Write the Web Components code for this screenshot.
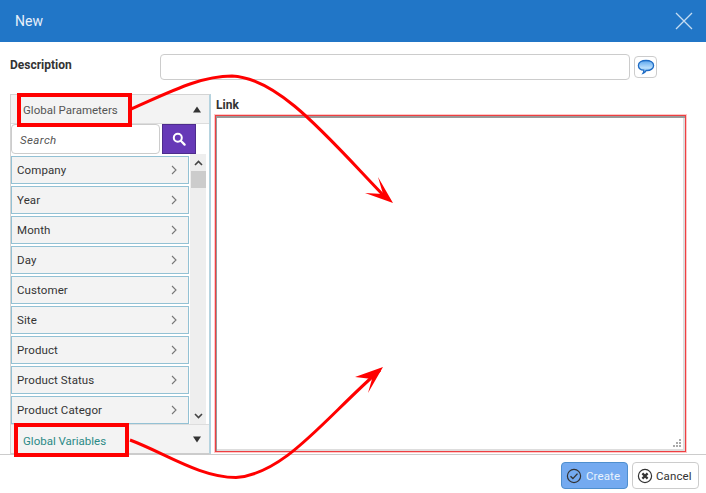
<!DOCTYPE html>
<html>
<head>
<meta charset="utf-8">
<style>
  html, body { margin: 0; height: 100%; background: #fff; }
  body { font-family: Roboto, "Liberation Sans", sans-serif; overflow: hidden; }
</style>
</head>
<body>
<new-dialog></new-dialog>
<script>
class ListRow extends HTMLElement {
  constructor() {
    super();
    this.attachShadow({ mode: 'open' });
    this.shadowRoot.innerHTML = `
      <style>
        :host {
          display: flex;
          align-items: center;
          justify-content: space-between;
          box-sizing: border-box;
          height: 28px;
          margin-bottom: 2px;
          padding: 0 11px 0 5px;
          background: #f3f3f3;
          border: 1px solid #93c1d4;
          font-size: 11.5px;
          letter-spacing: .1px;
          color: #333;
        }
        svg { display: block; }
      </style>
      <slot></slot>
      <svg width="6" height="10" viewBox="0 0 6 10"><path d="M1 1l4 4-4 4" fill="none" stroke="#777" stroke-width="1.1"/></svg>
    `;
  }
}

class AccordionBar extends HTMLElement {
  constructor() {
    super();
    this.attachShadow({ mode: 'open' });
    const up = this.hasAttribute('open');
    this.shadowRoot.innerHTML = `
      <style>
        :host {
          display: flex;
          align-items: center;
          justify-content: space-between;
          box-sizing: border-box;
          padding: 0 8px 0 12px;
          background: #f3f3f3;
          font-size: 11.5px;
          color: var(--bar-color, #555);
        }
        svg { display: block; }
        .text { position: relative; top: var(--text-shift, 0); }
      </style>
      <span class="text"><slot></slot></span>
      <svg width="8" height="7" viewBox="0 0 8 7"><path d="${up ? 'M4 0.5L8 6.5H0Z' : 'M0 0.5H8L4 6.5Z'}" fill="#333"/></svg>
    `;
  }
}

class SearchRow extends HTMLElement {
  constructor() {
    super();
    this.attachShadow({ mode: 'open' });
    this.shadowRoot.innerHTML = `
      <style>
        :host { display: flex; gap: 2px; height: 30px; }
        .field {
          box-sizing: border-box;
          width: 149px;
          padding: 1px 8px 0;
          display: flex;
          align-items: center;
          border: 1px solid #ccc;
          border-radius: 4px;
          background: #fff;
          font-size: 11.5px;
          font-style: italic;
          letter-spacing: .4px;
          color: #555;
        }
        .go {
          box-sizing: border-box;
          width: 34px;
          display: flex;
          align-items: center;
          justify-content: center;
          background: #6639b7;
          border: 1px solid #4d2c8c;
        }
      </style>
      <div class="field">Search</div>
      <div class="go">
        <svg width="14" height="14" viewBox="0 0 14 14"><circle cx="5.8" cy="5.8" r="4" fill="none" stroke="#fff" stroke-width="2"/><path d="M8.8 8.8L12.6 12.6" stroke="#fff" stroke-width="2.2" stroke-linecap="round"/></svg>
      </div>
    `;
  }
}

class ParamPanel extends HTMLElement {
  constructor() {
    super();
    this.attachShadow({ mode: 'open' });
    const names = ['Company', 'Year', 'Month', 'Day', 'Customer', 'Site', 'Product', 'Product Status', 'Product Categor'];
    this.shadowRoot.innerHTML = `
      <style>
        :host {
          display: flex;
          flex-direction: column;
          box-sizing: border-box;
          width: 201px;
          height: 361px;
          border: 1px solid #d4d4d4;
          border-right: 2px solid #b5d3df;
          border-bottom: 2px solid #ccc;
          overflow: hidden;
        }
        accordion-bar.top { height: 29px; border-bottom: 1px solid #ddd; --text-shift: 1px; }
        accordion-bar.bottom { flex: 1; border-top: 1px solid #ddd; --bar-color: #2b8a86; --text-shift: 2px; }
        .list { display: flex; gap: 1px; height: 270px; overflow: hidden; }
        .rows { width: 178px; padding-top: 2px; }
        .scroll {
          width: 16px;
          height: 270px;
          background: #eee;
          display: flex;
          flex-direction: column;
          align-items: center;
          justify-content: space-between;
        }
        .thumb { width: 15px; height: 17px; background: #ccc; }
        .end { height: 17px; display: flex; align-items: center; }
        .col { display: flex; flex-direction: column; align-items: center; }
      </style>
      <accordion-bar class="top" open>Global Parameters</accordion-bar>
      <search-row></search-row>
      <div class="list">
        <div class="rows">${names.map(n => `<list-row>${n}</list-row>`).join('')}</div>
        <div class="scroll">
          <div class="col">
            <div class="end"><svg width="9" height="6" viewBox="0 0 9 6"><path d="M1 5l3.5-3.500L8 5" fill="none" stroke="#444" stroke-width="1.6"/></svg></div>
            <div class="thumb"></div>
          </div>
          <div class="end"><svg width="9" height="6" viewBox="0 0 9 6"><path d="M1 1l3.5 3.5L8 1" fill="none" stroke="#444" stroke-width="1.6"/></svg></div>
        </div>
      </div>
      <accordion-bar class="bottom">Global Variables</accordion-bar>
    `;
  }
}

class DialogButton extends HTMLElement {
  constructor() {
    super();
    this.attachShadow({ mode: 'open' });
    const primary = this.hasAttribute('primary');
    const mark = primary
      ? '<path d="M4.500 8.200l2.400 2.400 4.600-5" fill="none" stroke="#333" stroke-width="1.400"/>'
      : '<path d="M5.400 5.400l5.200 5.200M10.600 5.400l-5.200 5.200" stroke="#333" stroke-width="2.200"/>';
    this.shadowRoot.innerHTML = `
      <style>
        :host {
          display: flex;
          align-items: center;
          gap: ${primary ? 4 : 3}px;
          box-sizing: border-box;
          width: 67px;
          height: 27px;
          padding-left: 4px;
          border-radius: 4px;
          font-size: 11.5px;
          letter-spacing: .1px;
          border: 1px solid ${primary ? '#4f8fce' : '#ccc'};
          background: ${primary ? '#74aaf0' : '#fff'};
          color: ${primary ? '#e8f2fd' : '#333'};
        }
        svg { display: block; flex: none; }
      </style>
      <svg width="16" height="16" viewBox="0 0 16 16"><circle cx="8" cy="8" r="6.600" fill="${primary ? 'none' : '#fff'}" stroke="#333" stroke-width="1.200"/>${mark}</svg>
      <slot></slot>
    `;
  }
}

class NewDialog extends HTMLElement {
  constructor() {
    super();
    this.attachShadow({ mode: 'open' });
    this.shadowRoot.innerHTML = `
      <style>
        :host {
          display: flex;
          flex-direction: column;
          position: relative;
          width: 706px;
          height: 493px;
          overflow: hidden;
        }
        header {
          display: flex;
          align-items: center;
          justify-content: space-between;
          height: 42px;
          padding: 0 13px 0 15px;
          background: #2176c7;
          color: #e6f0fa;
          font-size: 14px;
        }
        .desc {
          display: flex;
          align-items: center;
          height: 26px;
          margin-top: 12px;
          padding-left: 10px;
        }
        .desc b { width: 150px; font-size: 12px; color: #333; position: relative; top: -2px; }
        .desc .input {
          box-sizing: border-box;
          width: 470px;
          height: 26px;
          border: 1px solid #ccc;
          border-radius: 4px;
        }
        .bubble {
          box-sizing: border-box;
          width: 23px;
          height: 22px;
          margin-left: 4px;
          display: flex;
          align-items: center;
          justify-content: center;
          border: 1px solid #ccc;
          border-radius: 4px;
        }
        main {
          display: flex;
          gap: 5px;
          margin-top: 14px;
          padding-left: 10px;
        }
        .link { display: flex; flex-direction: column; width: 470px; }
        .link b { height: 20px; padding-top: 1px; line-height: 21px; font-size: 12px; color: #333; }
        .area {
          position: relative;
          box-sizing: border-box;
          width: 471px;
          height: 337px;
          margin-left: -1px;
          border: 1px solid #ee3f42;
          background: #fff;
          box-shadow: 0 0 0 1px rgba(255, 130, 130, .45), inset 1px 2px 0 #999, inset -2px -2px 0 #ddd;
        }
        .grip { position: absolute; right: 4px; bottom: 4px; display: block; }
        footer {
          display: flex;
          justify-content: flex-end;
          gap: 4px;
          margin-top: -1px;
          flex: 1;
          padding: 7px 7px 0 0;
          border-top: 1px solid #ccc;
        }
        .marks { position: absolute; left: 0; top: 0; pointer-events: none; }
      </style>
      <header>
        <span>New</span>
        <svg width="18" height="18" viewBox="0 0 18 18"><path d="M1 1l16 16M17 1L1 17" stroke="#c5dcf2" stroke-width="1.300"/></svg>
      </header>
      <div class="desc">
        <b>Description</b>
        <div class="input"></div>
        <div class="bubble">
          <svg width="18" height="17" viewBox="0 0 18 17">
            <defs><linearGradient id="bub" x1="0" y1="0" x2="0" y2="1"><stop offset="0" stop-color="#5aa5ee"/><stop offset=".55" stop-color="#b6dcfb"/><stop offset="1" stop-color="#7fbdf2"/></linearGradient></defs>
            <path d="M9 1.500c4.400 0 7.600 2 7.600 5s-3 5-6.600 5c-.3 0-.6 0-.9 0-.5 1.200-1.600 2.300-3.100 2.800.6-.9.900-1.900.8-3.200C3.200 11.100 1.400 9 1.400 6.500c0-3 3.200-5 7.600-5z" fill="url(#bub)" stroke="#1e6bc4" stroke-width="1.300"/>
          </svg>
        </div>
      </div>
      <main>
        <param-panel></param-panel>
        <div class="link">
          <b>Link</b>
          <div class="area">
            <svg class="grip" width="8" height="8" viewBox="0 0 8 8" fill="#aaa"><rect x="6" y="0" width="2" height="2"/><rect x="3" y="3" width="2" height="2"/><rect x="6" y="3" width="2" height="2"/><rect x="0" y="6" width="2" height="2"/><rect x="3" y="6" width="2" height="2"/><rect x="6" y="6" width="2" height="2"/></svg>
          </div>
        </div>
      </main>
      <footer>
        <dialog-button primary>Create</dialog-button>
        <dialog-button>Cancel</dialog-button>
      </footer>
      <svg class="marks" width="706" height="493" viewBox="0 0 706 493" fill="none">
        <rect x="19" y="95" width="111" height="30" stroke="#f00" stroke-width="4"/>
        <rect x="16" y="425" width="111" height="30" stroke="#f00" stroke-width="4"/>
        <path d="M131 109C170 92 200 76 232 76C280 78 330 140 386 198" stroke="#f00" stroke-width="3"/>
        <path d="M393 203L378 177L383 194L365 193Z" fill="#f00"/>
        <path d="M130 440C165 453 200 477.500 236 477.500C285 474 325 418 380 370" stroke="#f00" stroke-width="3"/>
        <path d="M383 367L355 377L372 379L368 393Z" fill="#f00"/>
      </svg>
    `;
  }
}

customElements.define('list-row', ListRow);
customElements.define('accordion-bar', AccordionBar);
customElements.define('search-row', SearchRow);
customElements.define('param-panel', ParamPanel);
customElements.define('dialog-button', DialogButton);
customElements.define('new-dialog', NewDialog);
</script>
</body>
</html>
